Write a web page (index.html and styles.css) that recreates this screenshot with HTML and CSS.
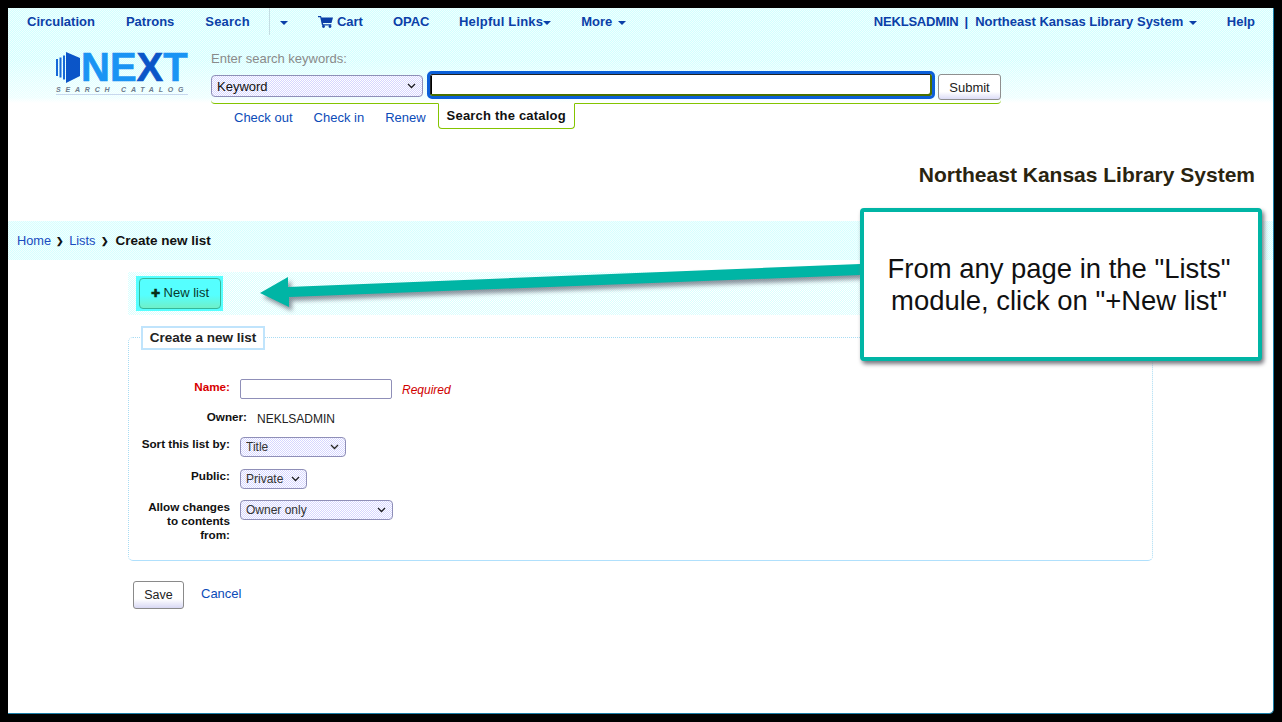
FILE: index.html
```html
<!DOCTYPE html>
<html lang="en">
<head>
    <meta charset="UTF-8">
    <title>Create new list</title>
    <link rel="stylesheet" href="styles.css">
</head>
<body>
<div class="page">
    <header class="masthead">
        <nav class="topnav">
            <a href="#">Circulation</a>
            <a href="#">Patrons</a>
            <a href="#" class="search-link">Search</a>
            <a href="#" class="caret-link"><span class="caret"></span></a>
            <a href="#" class="cart"><svg width="15" height="13" viewBox="0 0 15 13"><path d="M0 1h3l.5 1.500H15l-1.500 5.500H5l.3 1.200h8v1.300H4L2.200 2.300H0z" fill="#0b3fa8"/><circle cx="5.500" cy="11.500" r="1.400" fill="#0b3fa8"/><circle cx="12" cy="11.500" r="1.400" fill="#0b3fa8"/></svg>Cart</a>
            <a href="#" class="opac">OPAC</a>
            <a href="#" class="helpful">Helpful Links<span class="caret tight"></span></a>
            <a href="#">More <span class="caret"></span></a>
            <div class="user">
                <a href="#" class="user-name"><span class="who">NEKLSADMIN</span><span class="bar">|</span>Northeast Kansas Library System <span class="caret"></span></a>
                <a href="#" class="help">Help</a>
            </div>
        </nav>
        <div class="search-area">
            <div class="logo">
                <svg width="25" height="31" viewBox="0 0 25 31"><path d="M0 7h2v17H0zM3.500 5.500h2v20h-2zM7 3.500h2v24H7z" fill="#1668d8"/><path d="M10 0l14 6v18l-14 7z" fill="#0b55c8"/></svg>
                <div class="logo-word">NE<span class="logo-x">X</span>T</div>
                <div class="logo-sub">SEARCH CATALOG</div>
            </div>
            <div class="search-box">
                <label class="search-label">Enter search keywords:</label>
                <div class="search-row">
                    <select class="search-type"><option>Keyword</option></select>
                    <div class="search-input"><span class="text-cursor"></span></div>
                    <button class="submit">Submit</button>
                </div>
                <div class="tabs">
                    <a href="#">Check out</a>
                    <a href="#">Check in</a>
                    <a href="#">Renew</a>
                    <span class="tab-active">Search the catalog</span>
                </div>
            </div>
        </div>
    </header>

    <h1 class="library-name">Northeast Kansas Library System</h1>

    <div class="breadcrumbs">
        <a href="#">Home</a><span class="sep">&#10095;</span><a href="#">Lists</a><span class="sep">&#10095;</span><strong>Create new list</strong>
    </div>

    <main class="content">
        <div class="toolbar">
            <span class="highlight"><a href="#" class="new-list"><b>&#10010;</b> New list</a></span>
        </div>
        <fieldset class="list-form">
            <legend>Create a new list</legend>
            <div class="row row-name">
                <label class="required">Name:</label>
                <input type="text" class="name-input">
                <em>Required</em>
            </div>
            <div class="row row-owner">
                <label>Owner:</label>
                <span>NEKLSADMIN</span>
            </div>
            <div class="row row-sort">
                <label>Sort this list by:</label>
                <select class="sel-sort"><option>Title</option></select>
            </div>
            <div class="row row-public">
                <label>Public:</label>
                <select class="sel-public"><option>Private</option></select>
            </div>
            <div class="row row-allow">
                <label>Allow changes to contents from:</label>
                <select class="sel-allow"><option>Owner only</option></select>
            </div>
        </fieldset>
        <div class="actions">
            <button class="save">Save</button>
            <a href="#">Cancel</a>
        </div>
    </main>

    <svg class="arrow" width="610" height="60" viewBox="0 0 610 60">
        <path d="M4 33L32 17V27L604 4V15L33 37V47z" fill="#00b5a5"/>
    </svg>
    <div class="callout">From any page in the "Lists" module, click on "+New list"</div>
</div>
</body>
</html>
```

FILE: styles.css
```css
*{
    box-sizing: border-box;
}
body{
    margin: 0;
    height: 722px;
    padding: 8px;
    background-color: black;
    font-family: "Liberation Sans", Arial, sans-serif;
    font-size: 12px;
    color: #222;
    overflow: hidden;
}
a{
    color: #0b4bb8;
    text-decoration: none;
}
.page{
    position: relative;
    width: 1266px;
    height: 706px;
    background-color: white;
    border-right: 1px solid #1a7ea8;
    border-bottom: 1px solid #1a7ea8;
    border-bottom-right-radius: 5px;
}
.masthead{
    height: 95px;
    background: linear-gradient(transparent 55%, rgba(255,255,255,.55) 94%, white), repeating-conic-gradient(#d2ffff 0 25%, #f0ffff 0 50%) 0 0/2px 2px;
}
.topnav{
    display: flex;
    height: 27px;
    align-items: center;
    padding-left: 4px;
}
.topnav a{
    padding: 0 15px;
    font-size: 13px;
    font-weight: bold;
    color: #0b3fa8;
    white-space: nowrap;
}
.topnav a:nth-child(2){
    padding-left: 15px;
    margin-left: 1px;
}
.topnav .search-link{
    height: 27px;
    line-height: 27px;
    margin-left: 1px;
    padding-right: 19px;
    letter-spacing: .2px;
    border-right: 1px solid #c4dde2;
}
.topnav .caret-link{
    padding: 0 10px 0 8px;
    margin-right: 5px;
}
.topnav .helpful{
    margin-left: -.5px;
    letter-spacing: .2px;
}
.caret{
    display: inline-block;
    width: 0;
    height: 0;
    margin-left: 2px;
    vertical-align: middle;
    border-top: 4px solid #0b3fa8;
    border-left: 4px solid transparent;
    border-right: 4px solid transparent;
}
.caret.tight{
    margin-left: 0;
}
.cart svg{
    margin-right: 4px;
    vertical-align: -2px;
}
.user{
    display: flex;
    margin-left: auto;
    padding-right: 3px;
}
.topnav .user-name{
    padding-right: 14px;
}
.who{
    letter-spacing: -.2px;
}
.bar{
    margin: 0 7px 0 6px;
}
.search-area{
    display: flex;
    height: 68px;
}
.logo{
    position: relative;
    width: 132px;
    height: 44px;
    margin: 17px 23px 0 48px;
}
.logo svg{
    position: absolute;
    left: 0;
    top: 0;
}
.logo-word{
    position: absolute;
    left: 25px;
    top: 0;
    font-size: 40px;
    line-height: 30px;
    font-weight: bold;
    color: #1a94f4;
    -webkit-text-stroke: .6px #1a94f4;
    white-space: nowrap;
}
.logo-x{
    color: #0b55c8;
    -webkit-text-stroke: .6px #0b55c8;
}
.logo-sub{
    position: absolute;
    left: 0;
    right: 0;
    top: 33px;
    height: 10px;
    font-size: 7px;
    line-height: 9px;
    font-style: italic;
    font-weight: bold;
    letter-spacing: 4.800px;
    color: #6b7a8c;
    border-bottom: 1px solid #c8d8ee;
    white-space: nowrap;
}
.search-box{
    width: 790px;
}
.search-label{
    display: block;
    margin-top: 16px;
    height: 18px;
    font-size: 13px;
    color: #8a8a8a;
    line-height: 15px;
}
.search-row{
    display: flex;
    align-items: center;
    height: 35px;
    border-bottom: 1px solid #84c400;
    border-radius: 0 0 4px 4px;
    padding-bottom: 2px;
}
select{
    appearance: none;
    background: url("data:image/svg+xml,%3Csvg xmlns='http://www.w3.org/2000/svg' width='9' height='6'%3E%3Cpath d='M1 1l3.500 3.500L8 1' fill='none' stroke='%23222' stroke-width='1.300'/%3E%3C/svg%3E") no-repeat right 6px center, repeating-conic-gradient(#d6d6ff 0 25%, white 0 50%) 0 0/2px 2px;
}
.search-type{
    width: 212px;
    height: 22px;
    margin: 2px 0 0;
    padding-left: 5px;
    border: 1px solid #8f8fb8;
    border-radius: 4px;
    font-family: inherit;
    font-size: 13px;
    color: #111;
}
.search-input{
    display: flex;
    align-items: center;
    width: 508px;
    height: 28px;
    margin-left: 4px;
    padding-left: 1px;
    background-color: white;
    border: 3px solid #0b5fd8;
    border-radius: 5px;
    box-shadow: inset -2px -2px 0 #4a7000, inset 1px 1px 0 #222;
}
.text-cursor{
    width: 1px;
    height: 18px;
    background-color: black;
}
.submit{
    width: 63px;
    height: 26px;
    margin: 4px 0 0 3px;
    padding: 0;
    border: 1px solid #8f8f8f;
    border-radius: 3px;
    font-family: inherit;
    font-size: 13px;
    color: #222;
    background: linear-gradient(white 70%, #dcdcf6);
}
.tabs{
    display: flex;
    align-items: flex-start;
    padding-left: 23px;
    font-size: 13px;
}
.tabs a{
    margin-right: 21px;
    padding-top: 6px;
    line-height: 15px;
}
.tabs a:nth-child(3){
    margin-right: 12px;
}
.tab-active{
    height: 26px;
    margin-top: -1px;
    padding: 0 8px;
    line-height: 23px;
    font-weight: bold;
    letter-spacing: .2px;
    color: #111;
    background-color: white;
    border: 1px solid #84c400;
    border-top-color: white;
    border-radius: 0 0 4px 4px;
}
.library-name{
    margin: 60px 0 0;
    padding-right: 18px;
    height: 58px;
    text-align: right;
    font-size: 21px;
    line-height: 24px;
    color: #2a2410;
}
.breadcrumbs{
    display: flex;
    align-items: center;
    height: 39px;
    padding-left: 9px;
    background: repeating-conic-gradient(#d6ffff 0 25%, #f2ffff 0 50%) 0 0/2px 2px;
    font-size: 12.800px;
}
.breadcrumbs a{
    color: #1a4cc0;
}
.breadcrumbs .sep{
    width: 18px;
    text-align: center;
    font-size: 9px;
    font-weight: bold;
    color: #111;
}
.breadcrumbs .sep:nth-of-type(2){
    width: 20px;
}
.breadcrumbs strong{
    font-size: 13.500px;
    color: #111;
}
.content{
    margin: 12px 0 0 120px;
    width: 1025px;
}
.toolbar{
    height: 43px;
    padding: 4px 0 0 8px;
    background: repeating-conic-gradient(#d8ffff 0 25%, white 0 50%) 0 0/2px 2px;
}
.highlight{
    display: block;
    width: 87px;
    height: 35px;
    padding: 2px 2px 2px 3px;
    background-color: #55ffff;
}
.new-list{
    display: block;
    height: 31px;
    line-height: 28px;
    text-align: center;
    font-size: 13px;
    color: #0a3a2a;
    border: 1px solid #35b89a;
    border-radius: 4px;
    background: linear-gradient(#55ffff 55%, #6ff0c8);
}
.new-list b{
    font-size: 11px;
    color: #083018;
}
.list-form{
    position: relative;
    margin: 22px 0 0;
    padding: 0;
    height: 224px;
    border: 1px dotted #a8dcf4;
    border-bottom: 1px solid #b0e0fc;
    border-radius: 5px;
}
.list-form legend{
    position: absolute;
    left: 12px;
    top: -12px;
    width: 124px;
    height: 24px;
    padding: 0;
    text-align: center;
    line-height: 20px;
    font-size: 13.500px;
    font-weight: bold;
    color: #222;
    background-color: white;
    border: 2px solid #c0e4fc;
}
.row{
    display: flex;
    align-items: flex-start;
}
.row label{
    width: 101px;
    margin-right: 10px;
    padding-left: 8px;
    text-align: right;
    font-size: 11.700px;
    font-weight: bold;
    color: #111;
    line-height: 14px;
}
.row-name{
    margin-top: 41px;
}
.row-name label{
    padding-top: 1px;
}
.row-name em{
    margin: 4px 0 0 10px;
    color: #d00000;
}
.required.required{
    color: #d80000;
}
.name-input{
    width: 152px;
    height: 20px;
    margin: 0;
    border: 1px solid #8f8fb8;
    border-radius: 2px;
}
.row-owner{
    margin-top: 11px;
}
.row-owner label{
    width: 118px;
}
.row-owner span{
    padding-top: 2px;
    line-height: 14px;
}
.row-sort{
    margin-top: 11px;
}
.row-public{
    margin-top: 12px;
}
.row-allow{
    margin-top: 11px;
}
.row select{
    height: 20px;
    margin: 0;
    padding: 0 0 0 5px;
    border: 1px solid #8f8fb8;
    border-radius: 4px;
    font-family: inherit;
    font-size: 12px;
    color: #333;
}
.sel-sort{
    width: 106px;
}
.sel-public{
    width: 67px;
}
.sel-allow{
    width: 153px;
}
.actions{
    display: flex;
    align-items: center;
    margin: 20px 0 0 5px;
}
.save{
    width: 51px;
    height: 28px;
    padding: 0;
    border: 1px solid #8a8a8a;
    border-radius: 3px;
    font-family: inherit;
    font-size: 12.500px;
    color: #222;
    background: linear-gradient(white 65%, #d8d8f4);
}
.actions a{
    margin: -4px 0 0 17px;
    font-size: 13px;
}
.arrow{
    position: absolute;
    left: 248px;
    top: 252px;
    filter: drop-shadow(3px 4px 2px rgba(40,40,60,.5));
}
.callout{
    position: absolute;
    left: 852px;
    top: 200px;
    width: 402px;
    height: 153px;
    padding: 0 22px 0 18px;
    display: flex;
    align-items: center;
    justify-content: center;
    text-align: center;
    font-size: 27.450px;
    line-height: 32px;
    color: #111;
    background-color: white;
    border: 4px solid #00b5a5;
    border-radius: 4px;
    box-shadow: 2px 3px 4px #77777f;
}
```
